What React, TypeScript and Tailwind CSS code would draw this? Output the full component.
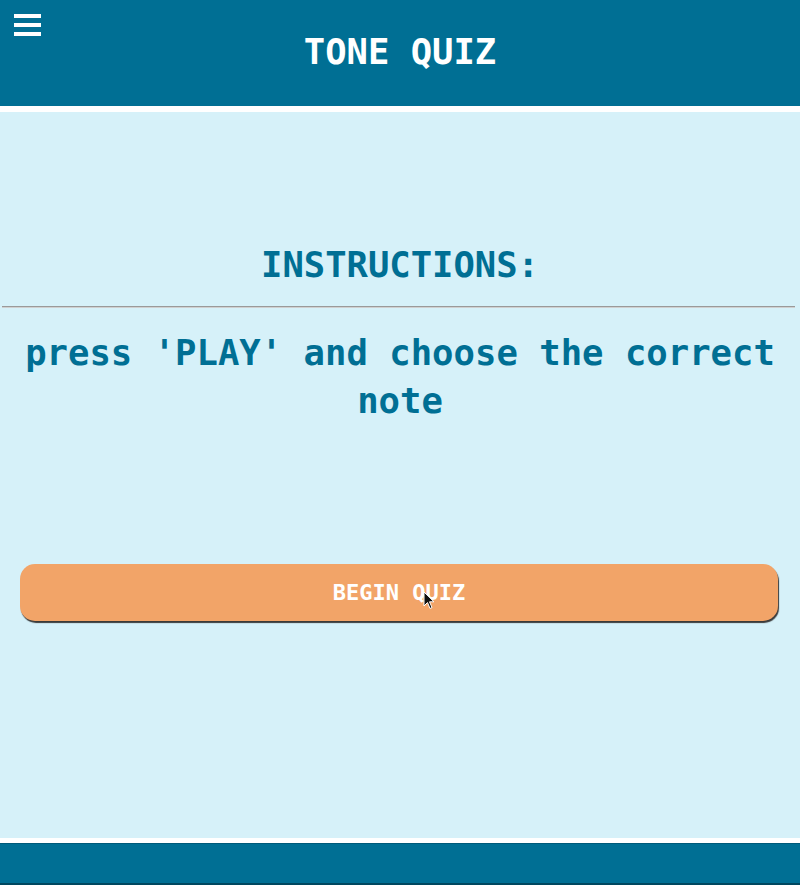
import React from "react";

const mono = { fontFamily: '"DejaVu Sans Mono", "Liberation Mono", monospace' };

export default function App() {
  return (
    <div className="w-full h-[885px] flex flex-col bg-white overflow-hidden" style={mono}>
      {/* header */}
      <header className="relative h-[106px] bg-[#006f94] flex items-start justify-center">
        <button className="absolute top-[14px] left-[14px] flex flex-col gap-[5px]">
          <span className="block w-[27px] h-[4px] bg-white" />
          <span className="block w-[27px] h-[4px] bg-white" />
          <span className="block w-[27px] h-[4px] bg-white" />
        </button>
        <h1 className="mt-[28px] text-[35.5px] leading-[48px] font-bold text-white">TONE QUIZ</h1>
      </header>

      {/* main */}
      <main className="mt-[6px] h-[726px] bg-[#d6f1f9] flex flex-col items-center">
        <h2 className="mt-[129px] text-[35.5px] leading-[48px] font-bold text-[#006f94]">INSTRUCTIONS:</h2>
        <div className="mt-[17px] w-[793px] self-start ml-[2px] border-t border-t-[#9a9a9a] border-b border-b-[#d0d0d0]" />
        <p className="mt-[21px] px-[16px] text-center text-[35.6px] leading-[48px] font-bold text-[#006f94]">
          press 'PLAY' and choose the correct note
        </p>
        <div className="relative mt-[139px] w-full px-[20px]">
          <button className="w-[758px] h-[57px] rounded-[15px] bg-[#f2a468] text-white text-[22px] font-bold shadow-[1px_2px_1px_#3a3a3a] flex items-center justify-center">
            BEGIN QUIZ
          </button>
          <svg className="absolute left-[423px] top-[27px]" width="12" height="19" viewBox="0 0 12 19">
            <path d="M1 1 L1 15 L4.5 11.5 L7 17.5 L9 16.5 L6.5 10.8 L11 10.8 Z" fill="#111" stroke="#fff" strokeWidth="1" />
          </svg>
        </div>
      </main>

      {/* footer */}
      <footer className="mt-[5px] flex-1 bg-[#006f94] border-t border-t-[#005a7a] border-b-2 border-b-[#00475f]" />
    </div>
  );
}
